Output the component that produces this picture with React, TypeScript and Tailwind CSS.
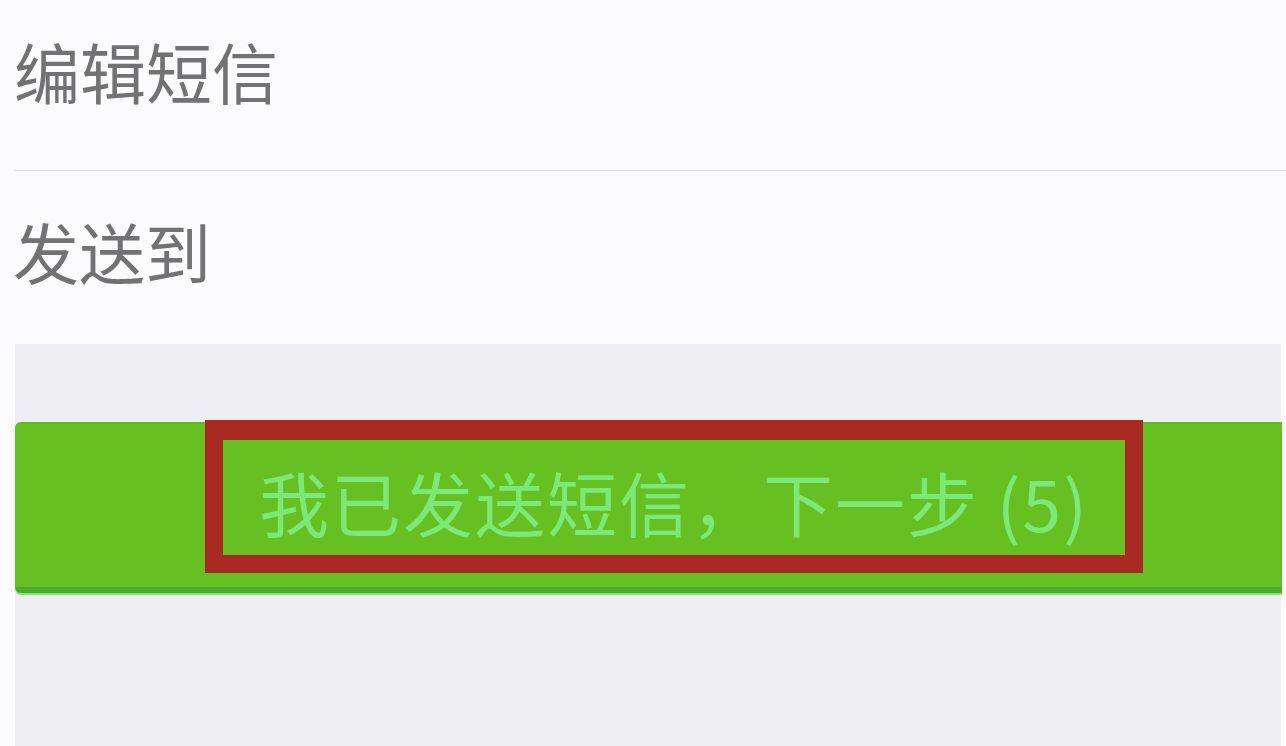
import React from "react";

const cjk = { fontFamily: '"Noto Sans CJK SC", "Noto Sans", sans-serif' };

export default function App() {
  return (
    <div className="w-[1286px] h-[746px] overflow-hidden bg-[#fbfafc] flex flex-col" style={cjk}>
      <div className="h-[170px] pl-[14px] pt-[30px] text-[66px] leading-[80px] text-[#727272]">
        编辑短信
      </div>
      <div className="ml-[15px] h-[1px] bg-[#dedde2]" />
      <div className="h-[173px] pl-[13px] pt-[39px] text-[66px] leading-[80px] text-[#727272]">
        发送到
      </div>
      <div className="flex-1 ml-[15px] mr-[5px] bg-[#efeef3] pt-[78px] flex flex-col">
        <div className="relative h-[171px] bg-[#67c022] rounded-l-[6px] border-t-[2px] border-t-[#5fb820] border-b-[6px] border-b-[#4faa2c] shadow-[0_2px_0_#7ee86a] -mr-[1px]">
          <div className="absolute left-[190px] top-[-4px] w-[938px] h-[153px] border-[18px] border-t-[20px] border-[#a82a22] flex items-center pl-[36px] pt-[8px]">
            <span className="text-[70px] leading-none text-[#7de87a] tracking-[2px] whitespace-nowrap">
              我已发送短信，下一步 (5)
            </span>
          </div>
        </div>
      </div>
    </div>
  );
}
